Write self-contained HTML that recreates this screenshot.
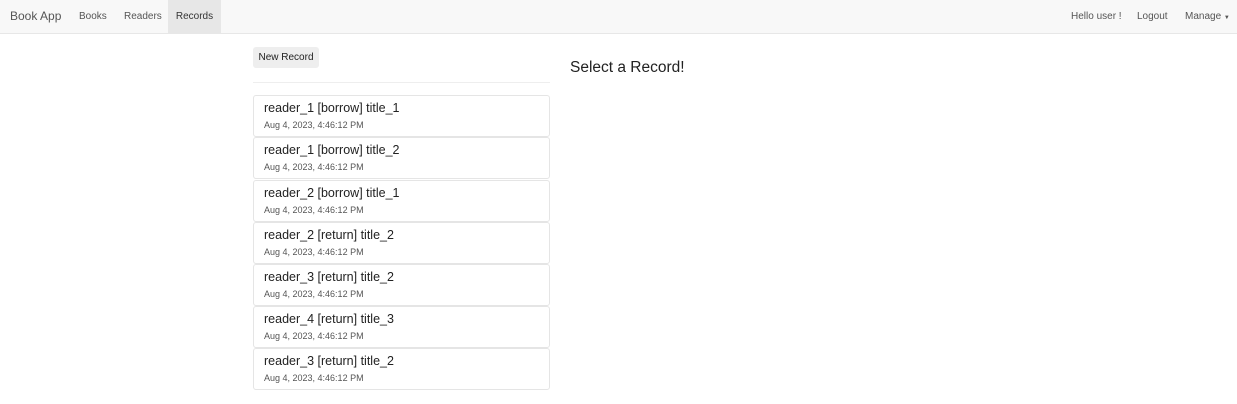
<!DOCTYPE html><html><head><style>
body{margin:0;font-family:"Liberation Sans",sans-serif;background:#fff;color:#333;width:1237px;height:404px;overflow:hidden;position:relative}
.nav{position:absolute;left:0;top:0;width:1237px;height:33px;background:#f8f8f8;border-bottom:1px solid #e7e7e7;font-size:10px;color:#555}
.nav span{position:absolute;top:0;line-height:33px}
.act{background:#e7e7e7;color:#333}
.btn{position:absolute;left:253px;top:47px;width:66px;height:21px;background:#eee;border-radius:3px;font-size:10px;line-height:21px;text-align:center;color:#222}
.hr{position:absolute;left:253px;top:82px;width:297px;height:1px;background:#eee}
.item{position:absolute;left:253px;width:295px;height:40px;border:1px solid #e5e5e5;border-radius:3px;background:#fff}
.item .t{position:absolute;left:10px;top:5px;font-size:12.5px;color:#222}
.item .d{position:absolute;left:10px;top:24px;font-size:9px;color:#555}
h3{position:absolute;left:570px;top:59px;margin:0;font-weight:normal;font-size:15.5px;color:#222}
</style></head><body>
<div class="nav">
<span style="left:10px;font-size:12px;color:#555">Book App</span>
<span style="left:79px">Books</span>
<span style="left:124px">Readers</span>
<span class="act" style="left:168px;width:53px;text-align:center">Records</span>
<span style="left:1071px">Hello user !</span>
<span style="left:1137px">Logout</span>
<span style="left:1185px">Manage <span style="position:static;font-size:6px">▼</span></span>
</div>
<div class="btn">New Record</div>
<div class="hr"></div>
<h3>Select a Record!</h3>
<div class="item" style="top:95px"><div class="t">reader_1 [borrow] title_1</div><div class="d">Aug 4, 2023, 4:46:12 PM</div></div>
<div class="item" style="top:137px"><div class="t">reader_1 [borrow] title_2</div><div class="d">Aug 4, 2023, 4:46:12 PM</div></div>
<div class="item" style="top:180px"><div class="t">reader_2 [borrow] title_1</div><div class="d">Aug 4, 2023, 4:46:12 PM</div></div>
<div class="item" style="top:222px"><div class="t">reader_2 [return] title_2</div><div class="d">Aug 4, 2023, 4:46:12 PM</div></div>
<div class="item" style="top:264px"><div class="t">reader_3 [return] title_2</div><div class="d">Aug 4, 2023, 4:46:12 PM</div></div>
<div class="item" style="top:306px"><div class="t">reader_4 [return] title_3</div><div class="d">Aug 4, 2023, 4:46:12 PM</div></div>
<div class="item" style="top:348px"><div class="t">reader_3 [return] title_2</div><div class="d">Aug 4, 2023, 4:46:12 PM</div></div>
</body></html>
